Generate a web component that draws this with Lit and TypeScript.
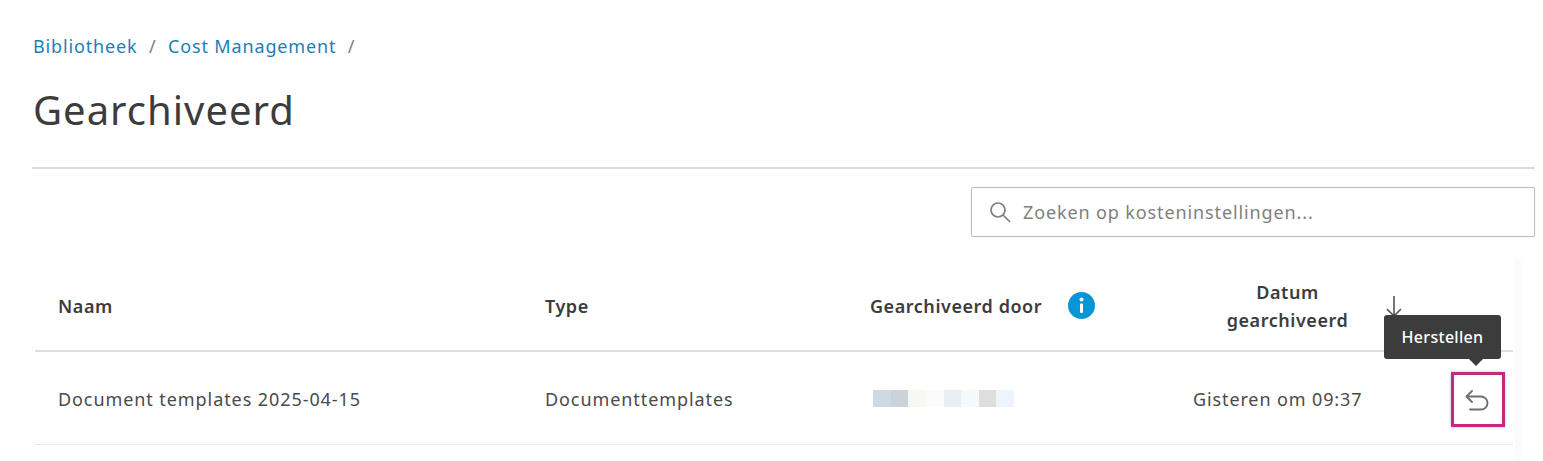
import { LitElement, html, css } from "lit";
import { customElement } from "lit/decorators.js";

const BLUR = ["#cfd9e2", "#cbd3da", "#f8f7f4", "#fafbfd", "#e9eef3", "#f6f9fb", "#dfdedb", "#edf4fb"];

@customElement("app-root")
export class AppRoot extends LitElement {
  static styles = css`
    :host { display: block; width: 1543px; height: 461px; overflow: hidden; background: #fff; color: #3c3c3c; font-family: "Noto Sans", "Open Sans", sans-serif; }
    .page { padding: 34px 8px 0 32px; }
    .crumbs { display: flex; align-items: center; height: 24px; padding-left: 1px; font-size: 18px; letter-spacing: 0.85px; color: #808080; }
    .crumbs a { color: #1b80b6; }
    .sep { margin: 0 11.5px; }
    h1 { margin: 25px 0 0 1px; font-weight: 400; font-size: 40px; line-height: 54px; letter-spacing: 1px; color: #3c3c3c; }
    .rule { height: 2px; background: #dcdcdc; margin-top: 30px; }
    .toolbar { display: flex; justify-content: flex-end; margin-top: 18px; }
    .search { box-sizing: border-box; width: 564px; height: 50px; border: 1px solid #bdbdbd; border-radius: 2px; box-shadow: 0 0 1px #ccc; display: flex; align-items: center; gap: 11px; padding-left: 16px; font-size: 18px; letter-spacing: 0.88px; color: #808080; }
    .search svg { width: 24px; height: 24px; flex: none; }
    .table { position: relative; margin: 22px 22px 0 3px; }
    .row { display: grid; grid-template-columns: 487px 325px 305px 1fr; align-items: center; border-bottom: 1px solid #e9e9e9; padding-left: 23px; }
    .head { height: 91px; border-bottom: 2px solid #dedede; font-weight: 600; font-size: 18px; letter-spacing: 0.55px; color: #3c3c3c; }
    .body { height: 92px; font-size: 18px; letter-spacing: 0.92px; color: #4a4a4a; }
    .head > div { padding-top: 2px; }
    .body > div { padding-top: 2px; }
    .by { display: flex; align-items: center; gap: 26px; }
    .info { width: 27px; height: 27px; flex: none; }
    .date { width: 217px; text-align: center; line-height: 28px; margin-left: 4px; margin-top: 1px; }
    .date-body { margin-left: 15px; padding-left: 3px; letter-spacing: 0.88px; }
    .blur { display: flex; margin-left: 3px; width: 141px; height: 17px; }
    .body > .blur { padding-top: 0; }
    .blur span { flex: 1; }
    .sort { position: absolute; left: 1349px; top: 37px; width: 20px; height: 30px; }
    .tooltip { position: absolute; left: 1349px; top: 56px; width: 117px; height: 44px; box-sizing: border-box; background: #3c3c3c; border-radius: 3px; color: #fff; font-size: 16px; letter-spacing: 0.3px; font-weight: 500; display: flex; align-items: center; justify-content: center; }
    .tooltip::after { content: ""; position: absolute; left: 85px; bottom: -7px; border-left: 7px solid transparent; border-right: 7px solid transparent; border-top: 7px solid #3c3c3c; }
    .action { position: absolute; left: 1416px; top: 113px; box-sizing: border-box; width: 54px; height: 55px; border: 3px solid #c7277f; display: flex; align-items: center; justify-content: center; box-shadow: 0 0 3px rgba(0,0,0,.25); }
    .action svg { width: 26px; height: 24px; }
    .strip { position: absolute; left: 1480px; top: 0; bottom: -20px; width: 6px; background: #fbfbfb; }
  `;

  render() {
    return html`<div class="page">
      <nav class="crumbs"><a>Bibliotheek</a><span class="sep">/</span><a>Cost Management</a><span class="sep">/</span></nav>
      <h1>Gearchiveerd</h1>
      <div class="rule"></div>
      <div class="toolbar">
        <div class="search">
          <svg viewBox="0 0 24 24" fill="none" stroke="#808080" stroke-width="1.7"><circle cx="10" cy="10" r="7"/><path d="M15 15l7 7"/></svg>
          <span>Zoeken op kosteninstellingen...</span>
        </div>
      </div>
      <div class="table">
        <div class="strip"></div>
        <div class="row head">
          <div>Naam</div>
          <div>Type</div>
          <div class="by"><span>Gearchiveerd door</span>
            <svg class="info" viewBox="0 0 27 27"><circle cx="13.5" cy="13.5" r="13.5" fill="#0696d7"/><circle cx="13.5" cy="7.5" r="2" fill="#fff"/><rect x="12" y="11.5" width="3" height="9.5" rx="1" fill="#fff"/></svg>
          </div>
          <div class="date">Datum<br />gearchiveerd</div>
        </div>
        <div class="row body">
          <div>Document templates 2025-04-15</div>
          <div>Documenttemplates</div>
          <div class="blur">${BLUR.map((c) => html`<span style="background:${c}"></span>`)}</div>
          <div class="date-body">Gisteren om 09:37</div>
        </div>
        <svg class="sort" viewBox="0 0 20 30" fill="none" stroke="#555" stroke-width="1.6"><path d="M10 0v20M3 13l7 7 7-7"/></svg>
        <div class="tooltip">Herstellen</div>
        <div class="action">
          <svg viewBox="0 0 26 24" fill="none" stroke="#6e6e6e" stroke-width="1.9" stroke-linecap="round" stroke-linejoin="round"><path d="M7 3L1.5 8.5 7 14"/><path d="M2 8.5H16a6.5 6.5 0 0 1 0 13H5"/></svg>
        </div>
      </div>
    </div>`;
  }
}
